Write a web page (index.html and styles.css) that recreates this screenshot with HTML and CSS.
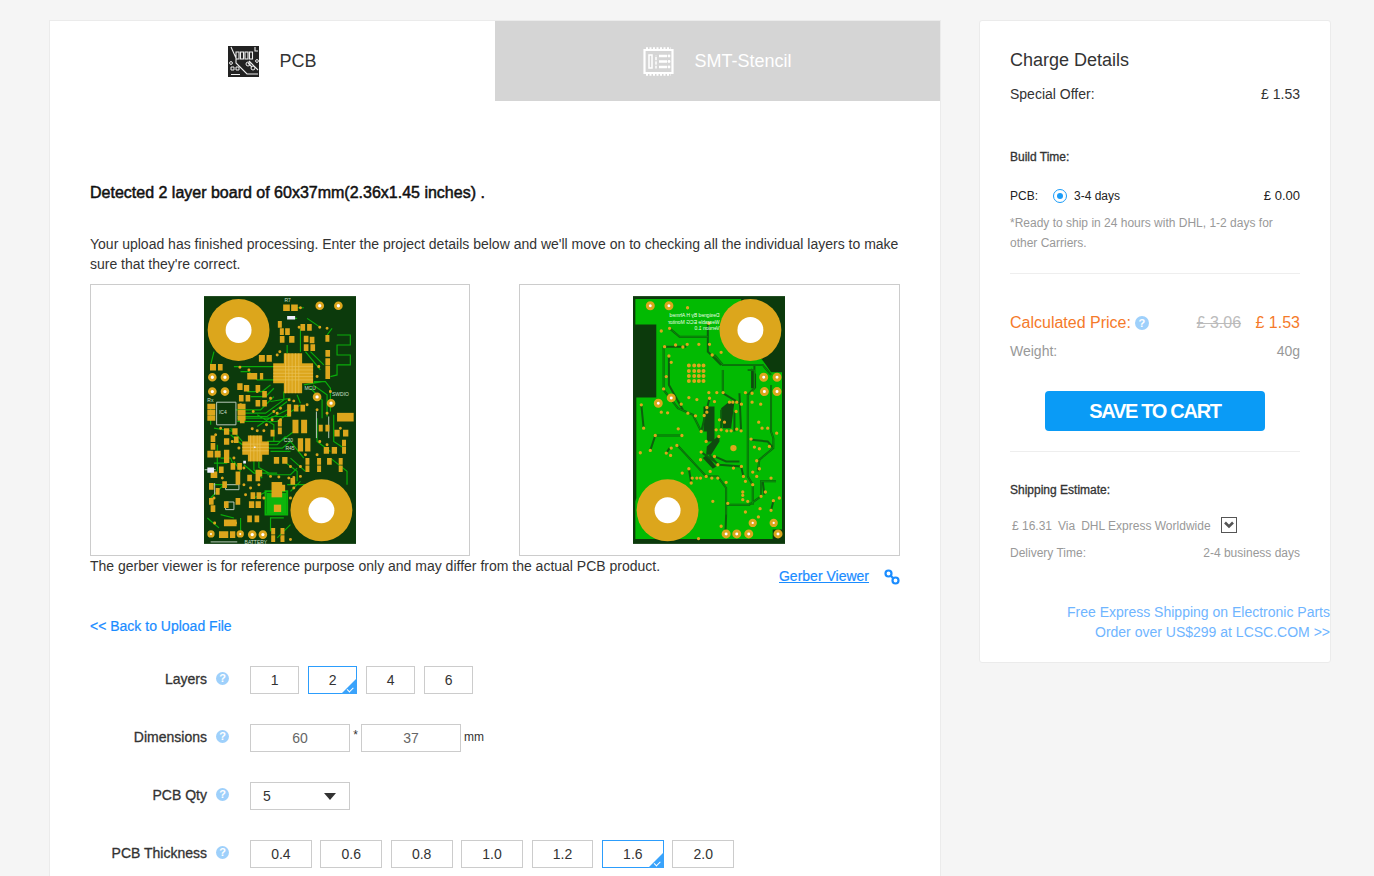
FILE: index.html
```html
<!DOCTYPE html>
<html lang="en">

<head>
  <meta charset="UTF-8">
  <title>PCB Quote</title>
  <link rel="stylesheet" href="styles.css">
</head>

<body>
  <div class="page">
    <main class="quote-card">
      <div class="tabs">
        <div class="tab tab-active">
          <svg class="tab-icon" viewBox="0 0 31 31">
            <rect width="31" height="31" fill="#222" />
            <path d="M3 1l5 11v5l11 11h11M8 6h3v7H8zM12.500 6h3v7h-3zM17 6h3v7h-3zM21.500 6h3v7h-3zM21 15l9 9M27 1v4h3M20 17l4 4" fill="none" stroke="#eee" stroke-width="1.1" />
            <circle cx="3" cy="17" r="1.400" fill="none" stroke="#eee" />
            <circle cx="20" cy="18" r="2" fill="none" stroke="#eee" />
            <circle cx="25" cy="22" r="2" fill="none" stroke="#eee" />
            <circle cx="29" cy="15" r="1.400" fill="none" stroke="#eee" />
            <path d="M3 21h3v3H3zM8 21h3v3H8zM3 28.500h9" fill="none" stroke="#eee" />
          </svg>
          <span>PCB</span>
        </div>
        <div class="tab tab-idle">
          <svg class="tab-icon" viewBox="0 0 31 31">
            <path d="M1.500 4h28v23h-28z" fill="none" stroke="#fff" stroke-width="2.200" />
            <path d="M3 2.500h25M3 28.500h25" fill="none" stroke="#fff" stroke-width="2.500" stroke-dasharray="2 1.500" />
            <path d="M6 9h3v13H6zM13 9.500v13" fill="none" stroke="#fff" stroke-width="1.500" />
            <path d="M13 9.500v13" fill="none" stroke="#d5d5d5" stroke-width="1.500" stroke-dasharray="1.500 3" />
            <path d="M16 10h8M16 15.500h8M16 21h8" fill="none" stroke="#fff" stroke-width="2.400" />
            <circle cx="26" cy="10" r="1.400" fill="#fff" />
            <circle cx="26" cy="15.500" r="1.400" fill="#fff" />
            <circle cx="26" cy="21" r="1.400" fill="#fff" />
          </svg>
          <span>SMT-Stencil</span>
        </div>
      </div>

      <div class="quote-body">
        <h2 class="detected">Detected 2 layer board of 60x37mm(2.36x1.45 inches) .</h2>
        <p class="intro">Your upload has finished processing. Enter the project details below and we'll move on to checking all the individual layers to make sure that they're correct.</p>

        <div class="viewer">
          <div class="viewer-frame">
            <svg class="board" viewBox="40 33 457 745">
              <rect class="top-bg" x="40" y="33" width="457" height="745" />
              <path class="top-trace" d="M70 200L60 240M130 245H250M150 260H175L200 285H250M370 290H405L420 310V380M340 300L395 290M440 150H480V180H440V210H480V240H440V270L420 275M330 130V200M290 180V205M410 150L425 130M240 350L300 340M140 400H240L300 370M140 410H260L330 360M230 470H270L310 440M240 500H300M160 540L190 565H260M230 570H300L320 550M80 480V560M60 600H110M130 530L150 560M200 390L250 420V470M300 470L340 520M380 400V470L420 500M430 390V470L460 490M350 100L390 127M320 68H340M290 100H320M60 370V420M70 430L130 440M100 600L60 640M150 700V745M190 640L230 620M300 620L330 590M140 395H230L290 350M145 385H225L280 345M135 375H210L250 335M200 425L245 395H300M120 430L155 470M120 450L155 480M235 480H260L285 455M235 490H275L300 470M190 530V555L215 580M205 530V548L235 565M90 520H120L130 545M70 535H110M240 300L215 320H170M250 310L225 335H180M360 310L395 345V400M368 300L410 330V395M280 530L320 560V590M300 520L345 560M420 520L470 560V600M350 600H290M90 690L130 700M50 700L85 730M300 720L260 760M280 700H240V740M360 200L400 240M345 200L390 255M280 320V345M320 330L330 355" />
              <path class="top-trace-thick" d="M225 620H290V690H225zM240 650H280" />
              <path class="top-fill" d="M228 625H288V688H228z" />
              <path class="silk" d="M78 352H136V420H78zM378 380V460M415 395V460M72 595V630M105 600H145V615H105zM105 652H130V675H105zM60 772H140M42 555H75" />
              <path class="gold-pad" stroke-width="20" d="M278 68h20M302 68h20M330 127h14M350 127h14M262 118h12M268 140h12M284 140h14M268 163h14M296 163h16M340 162h14M358 165h14M340 188h14M360 188h14M405 160h12M405 205h14M405 230h14M405 252h14M405 272h14M205 220h18M228 220h16M58 247h18M82 247h14M170 274h30M208 274h10M140 305h16M160 310h16M195 310h14M215 328h14M145 340h14M165 340h14M195 355h14M215 355h14M148 405h14M290 368h12M310 370h14M330 370h14M306 415h18M332 415h18M306 435h18M332 435h18M262 415h12M262 438h12M322 470h16M344 470h16M322 490h16M344 490h16M400 497h16M424 497h16M455 475h12M455 497h12M432 445h16M458 445h16M345 530h12M345 552h12M380 530h12M380 552h12M410 530h14M445 530h12M445 552h12M60 462h14M60 485h14M50 508h18M72 508h18M100 505h16M100 525h16M100 440h16M125 440h16M100 470h16M60 570h20M250 527h16M275 527h16M195 565h20M170 580h14M195 580h14M180 633h14M198 633h14M175 660h16M195 660h16M170 703h14M192 703h14M100 715h38M85 750h28M118 750h16M242 740h12M270 740h12M242 762h12M270 762h12M55 605h14M55 650h14M60 672h14M100 660h14M135 570h14M135 590h14M300 590h14M250 610h14M270 610h14M120 545h14M140 545h14M85 555h14M95 600h14M290 385h12M75 620h12M130 465h14M240 445h12M135 650h14M385 430h12M405 430h12" />
              <path class="gold-pad" stroke-width="26" d="M440 397h50" />
              <path class="gold-pad" stroke-width="16" d="M50 365h24M50 383h24M50 400h24M141 365h24M141 383h24M141 400h24" />
              <rect class="gold-fill" x="280" y="205" width="55" height="120" />
              <rect class="gold-fill" x="248" y="235" width="120" height="60" />
              <rect class="gold-fill" x="172" y="452" width="43" height="78" />
              <rect class="gold-fill" x="155" y="470" width="80" height="40" />
              <rect class="gold-fill" x="243" y="592" width="32" height="46" />
              <rect class="gold-fill" x="250" y="660" width="22" height="22" />
              <path class="pin-lines" d="M285 205v120M295 205v120M305 205v120M315 205v120M325 205v120M248 245h120M248 255h120M248 265h120M248 275h120M248 285h120M180 452v78M190 452v78M200 452v78M208 452v78M155 478h80M155 488h80M155 498h80" />
              <path class="gold-dot" stroke-width="9" d="M148 247h0M175 255h0M260 210h0M326 127h0M388 127h0M410 130h0M330 68h0M268 200h0M296 345h0M310 348h0M350 360h0M380 375h0M200 320h0M188 380h0M270 370h0M260 385h0M200 438h0M220 438h0M185 432h0M245 405h0M228 420h0M270 405h0M410 385h0M450 430h0M388 470h0M410 480h0M345 510h0M380 510h0M300 545h0M330 545h0M160 550h0M130 520h0M90 430h0M75 450h0M240 575h0M265 577h0M295 580h0M310 578h0M330 575h0M165 630h0M180 610h0M70 640h0M275 760h0M300 765h0M72 715h0M120 715h0M135 715h0M420 320h0M380 275h0M385 245h0M225 355h0M240 340h0M250 380h0M150 360h0M125 470h0M145 490h0M85 510h0M95 580h0M160 600h0M205 600h0M220 640h0M300 640h0M310 610h0" />
              <g class="rings">
                <circle cx="65" cy="277" r="9" /><circle cx="103" cy="277" r="9" />
                <circle cx="65" cy="320" r="9" /><circle cx="103" cy="320" r="9" />
                <circle cx="380" cy="336" r="9" /><circle cx="422" cy="355" r="9" />
                <circle cx="388" cy="62" r="9" /><circle cx="444" cy="62" r="9" />
                <circle cx="61" cy="748" r="7" /><circle cx="149" cy="748" r="7" />
                <circle cx="185" cy="750" r="9" /><circle cx="217" cy="750" r="9" />
              </g>
              <path class="white-bit" d="M290 93h24v10h-24zM50 548h20v16H50zM158 528h8v8h-8zM190 485h5v5h-5z" />
              <circle class="big-pad" cx="144" cy="135" r="93" /><circle class="hole" cx="144" cy="135" r="39" />
              <circle class="big-pad" cx="393" cy="677" r="93" /><circle class="hole" cx="393" cy="677" r="39" />
              <g class="silk-text">
                <text x="282" y="52">R7</text>
                <text x="342" y="315">MCU</text>
                <text x="425" y="332">SWDIO</text>
                <text x="162" y="778">BATTERY</text>
                <text x="85" y="388">IC4</text>
                <text x="280" y="472">C30</text>
                <text x="285" y="495">R45</text>
                <text x="50" y="350">Rx</text>
              </g>
            </svg>
          </div>
          <div class="viewer-frame">
            <svg class="board" viewBox="40 33 457 745">
              <rect class="bottom-edge" x="40" y="33" width="457" height="745" />
              <path class="bottom-bg" d="M47 42H365V140L440 240L455 262H488V735H460V763H47V650L50 640V338H110V118H47z" />
              <path class="bottom-dark" d="M252 365H285V470H262V440H252zM262 485L300 450V470L275 510H260zM305 370L330 350H345L335 430H310zM395 250L410 268V310H395zM262 510L290 545L280 552L250 520z" />
              <path class="bottom-trace" d="M132 185V315L175 370L220 390L245 440M148 215V300L190 375M132 185H200M285 210L310 240H430L455 270M310 255V325M265 115V200L305 240M150 130L180 155H265M310 325L360 355M385 255H405V310L385 330V575L400 600V660M455 300V440L462 460V490L420 525L415 560M395 465L445 470L462 490M107 452H185M107 452L92 497M172 480L260 575M245 502L300 540L365 545L372 575M285 515L320 530H360M260 575H295L320 610V690M320 660H390L425 635V590H470M65 360L72 430M208 552L215 595M345 380V440M305 375V430M270 340L245 440M360 325L365 440M405 240V262M430 590L435 630M462 650L455 677M150 490L140 505M270 510L295 540M320 690L318 745" />
              <path class="bottom-core" d="M132 185V315L175 370L220 390L245 440M285 210L310 240H430L455 270M310 255V325M150 130L180 155H265M385 255H405V310L385 330V575L400 600V660M455 300V440L462 460V490L420 525L415 560M107 452H185M172 480L260 575M260 575H295L320 610V690M320 660H390L425 635V590H470" />
              <path class="gold-dot" stroke-width="12" d="M208 242h0M224 242h0M238 242h0M252 242h0M208 258h0M224 258h0M238 258h0M252 258h0M208 273h0M224 273h0M238 273h0M252 273h0M208 288h0M224 288h0M238 288h0M252 288h0" />
              <path class="gold-dot" stroke-width="10" d="M204 68h0M150 130h0M125 138h0M268 115h0M270 178h0M278 210h0M305 202h0M135 185h0M168 180h0M190 186h0M203 178h0M238 178h0M148 213h0M155 232h0M140 275h0M132 312h0M185 358h0M125 382h0M144 384h0M208 338h0M232 344h0M205 385h0M228 393h0M268 323h0M292 323h0M311 323h0M270 340h0M285 350h0M262 368h0M262 382h0M254 392h0M245 440h0M290 435h0M305 435h0M322 438h0M335 438h0M352 433h0M365 438h0M300 405h0M315 412h0M330 352h0M340 352h0M352 352h0M366 358h0M350 380h0M378 323h0M398 325h0M398 352h0M424 358h0M418 412h0M428 430h0M445 430h0M472 445h0M260 470h0M298 455h0M395 463h0M405 487h0M420 492h0M450 485h0M412 528h0M420 552h0M400 562h0M412 575h0M455 580h0M65 360h0M72 430h0M107 452h0M187 452h0M92 497h0M62 504h0M140 505h0M155 490h0M172 482h0M153 512h0M176 432h0M245 502h0M243 525h0M285 515h0M295 540h0M272 560h0M342 550h0M366 545h0M188 565h0M208 552h0M215 595h0M218 580h0M232 580h0M243 580h0M260 575h0M277 580h0M295 580h0M320 593h0M372 575h0M378 590h0M400 600h0M370 622h0M370 632h0M370 645h0M385 650h0M425 635h0M438 622h0M462 648h0M455 677h0M280 650h0M325 656h0M378 682h0M422 672h0M417 697h0M480 640h0M305 725h0M237 762h0" />
              <g class="rings bottom-rings">
                <circle cx="92" cy="62" r="9" /><circle cx="148" cy="62" r="9" />
                <circle cx="116" cy="355" r="9" /><circle cx="155" cy="339" r="9" />
                <circle cx="433" cy="277" r="9" /><circle cx="473" cy="277" r="9" />
                <circle cx="435" cy="320" r="9" /><circle cx="473" cy="320" r="9" />
                <circle cx="400" cy="715" r="8" /><circle cx="463" cy="715" r="8" />
                <circle cx="320" cy="748" r="9" /><circle cx="352" cy="748" r="9" />
                <circle cx="388" cy="748" r="9" /><circle cx="476" cy="748" r="9" />
                <circle cx="342" cy="490" r="5" />
              </g>
              <circle class="big-pad" cx="393" cy="135" r="93" /><circle class="hole" cx="393" cy="135" r="39" />
              <circle class="big-pad" cx="144" cy="677" r="93" /><circle class="hole" cx="144" cy="677" r="39" />
              <g class="mirror-text" transform="scale(-1 1)">
                <text x="-300" y="96">Designed By H Ahmed</text>
                <text x="-300" y="116">Wearable ECG Monitor</text>
                <text x="-300" y="135">Version 1.0</text>
              </g>
            </svg>
          </div>
        </div>

        <div class="viewer-note">
          <span>The gerber viewer is for reference purpose only and may differ from the actual PCB product.</span>
          <div class="viewer-link">
            <a href="#">Gerber Viewer</a>
            <svg class="chain" viewBox="0 0 16 16">
              <circle cx="4.500" cy="4.500" r="3" />
              <circle cx="11.500" cy="11.500" r="3" />
              <path d="M6.500 6.500l3 3" />
            </svg>
          </div>
        </div>

        <a class="back-link" href="#">&lt;&lt; Back to Upload File</a>

        <div class="form-rows">
          <div class="form-row">
            <div class="row-label">Layers</div>
            <span class="help">?</span>
            <div class="options">
              <button class="opt opt-layer">1</button>
              <button class="opt opt-layer selected">2</button>
              <button class="opt opt-layer">4</button>
              <button class="opt opt-layer">6</button>
            </div>
          </div>
          <div class="form-row">
            <div class="row-label">Dimensions</div>
            <span class="help">?</span>
            <div class="dims">
              <input class="dim-input" type="text" value="60">
              <span class="dim-times">*</span>
              <input class="dim-input" type="text" value="37">
              <span class="dim-unit">mm</span>
            </div>
          </div>
          <div class="form-row">
            <div class="row-label">PCB Qty</div>
            <span class="help">?</span>
            <div class="qty-select">
              <span>5</span>
              <i class="caret"></i>
            </div>
          </div>
          <div class="form-row">
            <div class="row-label">PCB Thickness</div>
            <span class="help">?</span>
            <div class="options">
              <button class="opt opt-thick">0.4</button>
              <button class="opt opt-thick">0.6</button>
              <button class="opt opt-thick">0.8</button>
              <button class="opt opt-thick">1.0</button>
              <button class="opt opt-thick">1.2</button>
              <button class="opt opt-thick selected">1.6</button>
              <button class="opt opt-thick">2.0</button>
            </div>
          </div>
        </div>
      </div>
    </main>

    <aside class="charge-card">
      <h3 class="charge-title">Charge Details</h3>
      <div class="line special">
        <span>Special Offer:</span>
        <span>£ 1.53</span>
      </div>

      <div class="sub-head build-head">Build Time:</div>
      <div class="line build">
        <div class="build-left">
          <span>PCB:</span>
          <i class="radio"></i>
          <span>3-4 days</span>
        </div>
        <span class="build-price">£ 0.00</span>
      </div>
      <p class="ship-note">*Ready to ship in 24 hours with DHL, 1-2 days for other Carriers.</p>
      <hr class="rule rule-first">

      <div class="line calc">
        <div class="calc-left">
          <span>Calculated Price:</span>
          <span class="help">?</span>
        </div>
        <div>
          <s class="old-price">£ 3.06</s>
          <span class="new-price">£ 1.53</span>
        </div>
      </div>
      <div class="line weight">
        <span>Weight:</span>
        <span>40g</span>
      </div>

      <button class="save-btn">SAVE TO CART</button>
      <hr class="rule rule-second">

      <div class="sub-head ship-head">Shipping Estimate:</div>
      <div class="ship-row">
        <span>£ 16.31</span>
        <span>Via</span>
        <span>DHL Express Worldwide</span>
        <span class="ship-drop">
          <svg viewBox="0 0 14 14"><path d="M3 4.500l4 4 4-4" /></svg>
        </span>
      </div>
      <div class="line delivery">
        <span>Delivery Time:</span>
        <span>2-4 business days</span>
      </div>

      <a class="promo" href="#">Free Express Shipping on Electronic Parts<br>Order over US$299 at LCSC.COM &gt;&gt;</a>
    </aside>
  </div>
</body>

</html>
```

FILE: styles.css
```css
html,
body {
  height: 100%;
  margin: 0;
  overflow: hidden;
}

body {
  background: #f5f5f5;
  color: #333;
  font-family: 'Liberation Sans', Arial, sans-serif;
  font-size: 14px;
  line-height: 20px;
}

.page {
  display: flex;
  align-items: flex-start;
  gap: 38px;
  padding: 20px 0 0 49px;
}

/* left card */
.quote-card {
  width: 892px;
  box-sizing: border-box;
  height: 1200px;
  flex: none;
  background: #fff;
  border: 1px solid #ebebeb;
}

.tabs {
  display: flex;
  height: 80px;
}

.tab {
  flex: 1;
  display: flex;
  align-items: center;
  justify-content: center;
  gap: 20px;
  font-size: 18px;
}

.tab-active {
  background: #fff;
  color: #333;
}

.tab-idle {
  background: #d5d5d5;
  color: #fff;
}

.tab-icon {
  width: 31px;
  height: 31px;
  display: block;
}

.quote-body {
  padding: 82px 40px 0;
}

.detected {
  margin: 0;
  font-size: 16px;
  font-weight: 400;
  line-height: 20px;
  color: #111;
  -webkit-text-stroke: 0.5px #111;
}

.intro {
  margin: 31px 0 10px;
}

.viewer {
  display: flex;
  justify-content: space-between;
}

.viewer-frame {
  width: 380px;
  height: 272px;
  box-sizing: border-box;
  border: 1px solid #ccc;
  display: flex;
  align-items: center;
  justify-content: center;
}

.viewer-frame + .viewer-frame {
  width: 381px;
  padding-right: 1px;
}

.board {
  width: 152px;
  height: 248px;
  display: block;
}

/* board artwork */
.top-bg {
  fill: #0c3a0c;
}

.top-trace {
  fill: none;
  stroke: #0aac0a;
  stroke-width: 3.500;
}

.top-trace-thick {
  fill: none;
  stroke: #0ab30a;
  stroke-width: 6;
}

.top-fill {
  fill: #0cb50c;
}

.silk {
  fill: none;
  stroke: #b9c9b9;
  stroke-width: 3;
}

.gold-pad {
  fill: none;
  stroke: #dca61c;
}

.gold-fill {
  fill: #dca61c;
}

.gold-dot {
  fill: none;
  stroke: #dca61c;
  stroke-linecap: round;
}

.pin-lines {
  fill: none;
  stroke: #ecc45a;
  stroke-width: 2;
}

.rings circle {
  fill: #fff;
  stroke: #dca61c;
  stroke-width: 8;
}

.bottom-rings circle {
  stroke-width: 9;
}

.white-bit {
  fill: #eef;
}

.big-pad {
  fill: #dca61c;
}

.hole {
  fill: #fff;
}

.silk-text text {
  fill: #cfe0cf;
  font-size: 15px;
}

.bottom-edge {
  fill: #0c3a0c;
}

.bottom-bg {
  fill: #02ba02;
}

.bottom-dark {
  fill: #0f4a0f;
}

.bottom-trace {
  fill: none;
  stroke: #0c5f0c;
  stroke-width: 6;
}

.bottom-core {
  fill: none;
  stroke: #06a806;
  stroke-width: 2;
}

.mirror-text text {
  fill: #eaffea;
  font-size: 15px;
}

.viewer-note {
  display: flex;
  justify-content: space-between;
  height: 30px;
}

.viewer-link {
  display: flex;
  align-items: center;
  gap: 15px;
  height: 20px;
  margin-top: 10px;
}

.viewer-link a {
  color: #1a8cff;
  -webkit-text-stroke: 0.2px #1a8cff;
}

.chain {
  width: 16px;
  height: 16px;
  margin-top: 2px;
  fill: none;
  stroke: #1a8cff;
  stroke-width: 2.200;
}

.back-link {
  display: block;
  margin-top: 30px;
  color: #1a8cff;
  text-decoration: none;
  -webkit-text-stroke: 0.2px #1a8cff;
}

/* form rows */
.form-rows {
  display: flex;
  flex-direction: column;
  gap: 30px;
  margin-top: 30px;
}

.form-row {
  display: flex;
  align-items: center;
  height: 28px;
}

.row-label {
  width: 117px;
  margin-top: -2px;
  text-align: right;
  color: #333;
  -webkit-text-stroke: 0.3px #333;
}

.help {
  width: 13px;
  height: 13px;
  border-radius: 50%;
  background: #9ed0fb;
  color: #fff;
  font-size: 11px;
  font-weight: 700;
  line-height: 13px;
  text-align: center;
  display: inline-block;
  flex: none;
}

.form-row .help {
  margin: -3px 21px 0 9px;
}

.options {
  display: flex;
  gap: 8.600px;
}

.opt {
  position: relative;
  height: 28px;
  box-sizing: border-box;
  padding: 0;
  border: 1px solid #ccc;
  background: #fff;
  color: #333;
  font-family: inherit;
  font-size: 14px;
}

.opt-layer {
  width: 49.400px;
}

.opt-thick {
  width: 61.800px;
}

.opt.selected {
  border-color: #2c9dfc;
}

.opt.selected::before {
  content: "";
  position: absolute;
  right: -1px;
  bottom: -1px;
  width: 0;
  height: 0;
  border-left: 16px solid transparent;
  border-bottom: 16px solid #3aa3fb;
}

.opt.selected::after {
  content: "";
  position: absolute;
  right: 3px;
  bottom: 3px;
  width: 5px;
  height: 2.500px;
  border-left: 1px solid #fff;
  border-bottom: 1px solid #fff;
  transform: rotate(-45deg);
}

.dims {
  display: flex;
  align-items: flex-start;
}

.dim-input {
  width: 100px;
  height: 28px;
  box-sizing: border-box;
  padding: 0;
  border: 1px solid #ccc;
  text-align: center;
  color: #666;
  font-family: inherit;
  font-size: 14px;
  outline: none;
}

.dim-times {
  width: 11px;
  text-align: center;
  font-size: 12px;
  line-height: 22px;
}

.dim-unit {
  margin-left: 3px;
  font-size: 12px;
  line-height: 26px;
}

.qty-select {
  width: 100px;
  height: 28px;
  box-sizing: border-box;
  border: 1px solid #ccc;
  padding: 0 13px 0 12px;
  display: flex;
  align-items: center;
  justify-content: space-between;
}

.caret {
  width: 0;
  height: 0;
  border-left: 6.500px solid transparent;
  border-right: 6.500px solid transparent;
  border-top: 7px solid #333;
}

/* right card */
.charge-card {
  width: 352px;
  box-sizing: border-box;
  height: 643px;
  flex: none;
  background: #fff;
  border: 1px solid #ebebeb;
  border-radius: 3px;
  padding: 0 30px;
}

.charge-title {
  margin: 28px 0 0;
  font-size: 18px;
  font-weight: 400;
  line-height: 22px;
  color: #333;
}

.line {
  display: flex;
  justify-content: space-between;
  align-items: center;
}

.special {
  margin-top: 13px;
}

.sub-head {
  font-size: 12px;
  color: #333;
  -webkit-text-stroke: 0.3px #333;
}

.build-head {
  margin-top: 43px;
}

.build {
  margin-top: 19px;
  font-size: 12px;
  color: #222;
}

.build-left {
  display: flex;
  align-items: center;
}

.radio {
  width: 6px;
  height: 6px;
  margin: 0 7px 0 15px;
  border: 1.500px solid #1a9cf8;
  padding: 3px;
  border-radius: 50%;
  background: #1a9cf8;
  background-clip: content-box;
}

.build-price {
  font-size: 13px;
}

.ship-note {
  margin: 7px 0 0;
  font-size: 12px;
  color: #999;
}

.rule {
  margin: 0;
  border: 0;
  border-top: 1px solid #eee;
}

.rule-first {
  margin-top: 20px;
}

.calc {
  margin-top: 39px;
  font-size: 16px;
  color: #f57a2a;
}

.calc-left {
  display: flex;
  align-items: center;
  gap: 4px;
}

.calc-left .help {
  width: 14px;
  height: 14px;
  line-height: 14px;
}

.old-price {
  color: #bbb;
  margin-right: 10px;
}

.new-price {
  color: #f57a2a;
}

.weight {
  margin-top: 8px;
  color: #999;
}

.save-btn {
  display: block;
  width: 220px;
  height: 40px;
  margin: 30px auto 0;
  border: 0;
  border-radius: 4px;
  background: #0a9bf6;
  color: #fff;
  font-family: inherit;
  font-size: 20px;
  font-weight: 700;
  letter-spacing: -1.300px;
}

.rule-second {
  margin-top: 20px;
}

.ship-head {
  margin-top: 28px;
}

.ship-row {
  display: flex;
  align-items: center;
  gap: 6px;
  margin: 16px 0 0 2px;
  font-size: 12px;
  color: #999;
}

.ship-drop {
  width: 14px;
  height: 14px;
  margin: -2px 0 0 4px;
  border: 1px solid #555;
  display: block;
}

.ship-drop svg {
  display: block;
  width: 14px;
  height: 14px;
  fill: none;
  stroke: #555;
  stroke-width: 2.600;
}

.delivery {
  margin-top: 7px;
  font-size: 12px;
  color: #999;
}

.promo {
  display: block;
  margin: 39px -30px 0 0;
  text-align: right;
  color: #6fb5ff;
  text-decoration: none;
}
```
